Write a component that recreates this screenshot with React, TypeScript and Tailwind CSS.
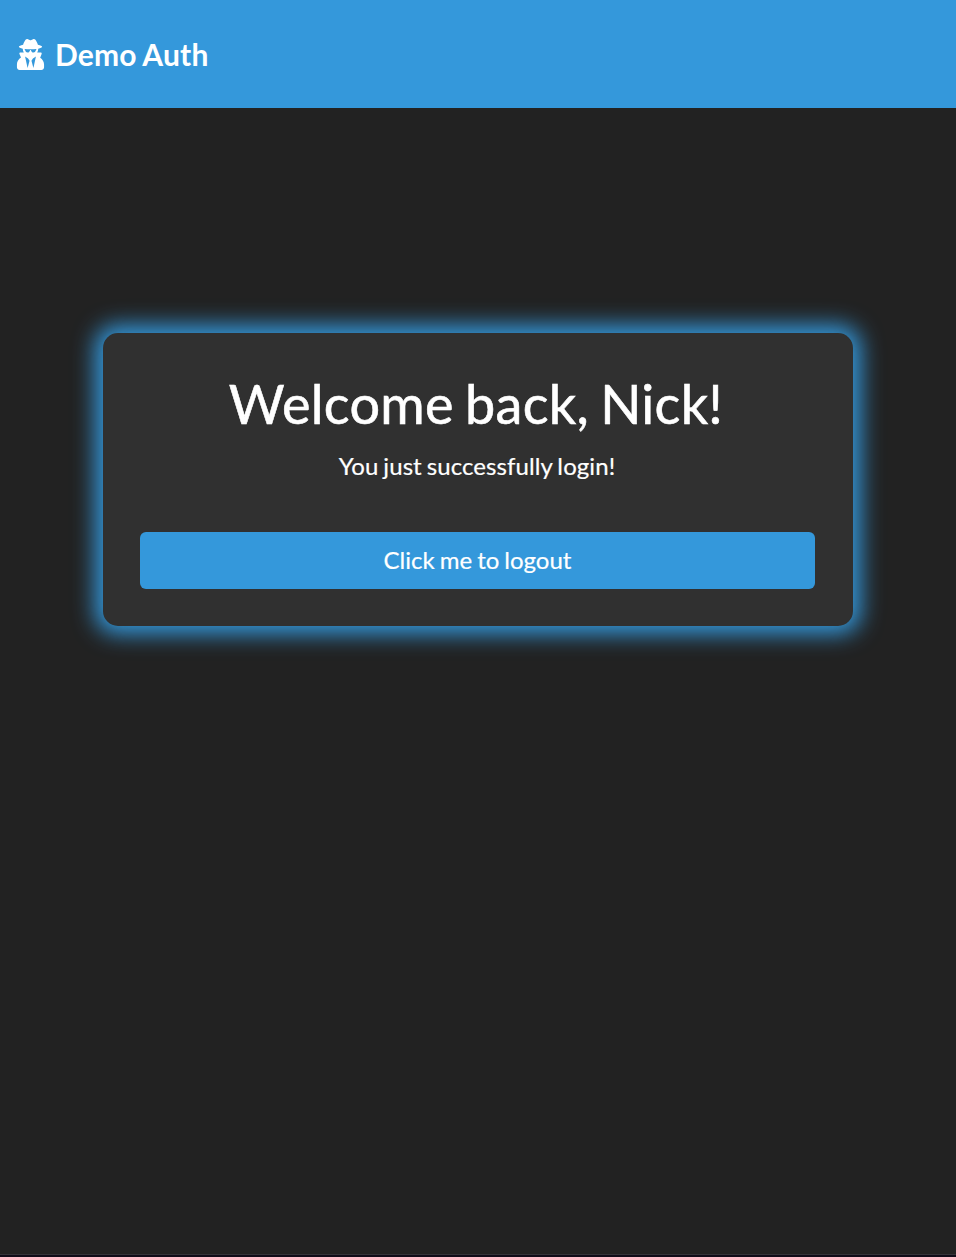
import { FaUserSecret } from "react-icons/fa";

export default function App() {
  return (
    <div className="flex h-[1257px] flex-col bg-[#222222] font-['Lato',sans-serif] text-white">
      <header className="flex h-[108px] items-center bg-[#3498db] px-[15px]">
        <h1 className="flex items-center gap-[9px] text-[30px] leading-9 font-bold tracking-[0.2px] [word-spacing:-1px]">
          <FaUserSecret className="mt-px h-[31px] w-[31px]" />
          <span>Demo Auth</span>
        </h1>
      </header>
      <main className="flex flex-1 flex-col items-center pt-[225px]">
        <section className="flex h-[293px] w-[750px] flex-col rounded-[15px] bg-[#303030] pt-[37px] pr-[38px] pl-[37px] text-center shadow-[0_0_22.5px_7.5px_#3498db]">
          <h2 className="pr-[3px] text-[54px] leading-[67px] tracking-[0.3px] [word-spacing:-3px] [-webkit-text-stroke:0.6px_white]">Welcome back, Nick!</h2>
          <p className="mt-[11px] pr-px text-[24px] leading-9 tracking-[0.09px] [word-spacing:-1.3px] [-webkit-text-stroke:0.2px_white]">You just successfully login!</p>
          <button className="mt-12 h-[57px] w-full rounded-[6px] bg-[#3498db] pb-0.5 text-[24px] leading-9 [word-spacing:-1.1px] [-webkit-text-stroke:0.2px_white]">
            Click me to logout
          </button>
        </section>
      </main>
      <div className="h-[3px] border-t border-[#353439] bg-[#100c19]" />
    </div>
  );
}
